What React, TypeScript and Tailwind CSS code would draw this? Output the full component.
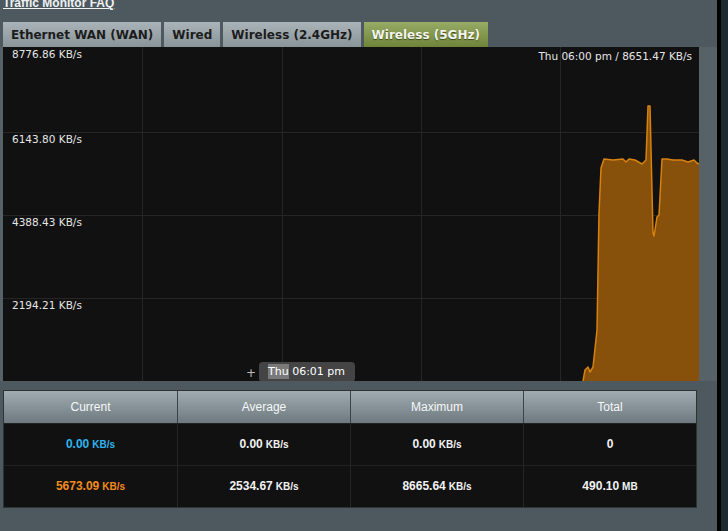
import React from "react";

const tabs = [
  { label: "Ethernet WAN (WAN)", active: false },
  { label: "Wired", active: false },
  { label: "Wireless (2.4GHz)", active: false },
  { label: "Wireless (5GHz)", active: true },
];

const axis = [
  { label: "8776.86 KB/s", top: 2 },
  { label: "6143.80 KB/s", top: 87 },
  { label: "4388.43 KB/s", top: 170 },
  { label: "2194.21 KB/s", top: 253 },
];

const points: [number, number][] = [
  [580, 334], [582, 323], [585, 320], [587, 325], [590, 320], [594, 283],
  [596, 166], [598, 121], [601, 112], [610, 113], [620, 112], [623, 115],
  [626, 112], [632, 113], [639, 117], [643, 113], [645, 59], [647, 59],
  [650, 186], [651, 189], [654, 170], [656, 168], [659, 112], [664, 112],
  [670, 113], [679, 113], [685, 115], [691, 113], [694, 116], [696, 117],
];

const line = points.map(([x, y], i) => `${i ? "L" : "M"}${x} ${y}`).join(" ");
const area = `${line} L696 334 Z`;

const columns = ["Current", "Average", "Maximum", "Total"];

const rows = [
  { color: "text-[#2db4ef]", cells: [["0.00", "KB/s"], ["0.00", "KB/s"], ["0.00", "KB/s"], ["0", ""]] },
  { color: "text-[#f28a1c]", cells: [["5673.09", "KB/s"], ["2534.67", "KB/s"], ["8665.64", "KB/s"], ["490.10", "MB"]] },
];

function Chart() {
  return (
    <div className="relative h-[334px] w-[696px] overflow-hidden bg-[#111111] font-['DejaVu_Sans',sans-serif] text-[10.5px] text-[#e6e6e6]">
      <svg className="absolute inset-0" width="696" height="334" viewBox="0 0 696 334">
        {[139, 279, 418, 557].map((x) => (
          <line key={x} x1={x + 0.5} y1="0" x2={x + 0.5} y2="334" stroke="#262626" strokeWidth="1" />
        ))}
        {[85, 168, 251].map((y) => (
          <line key={y} x1="0" y1={y + 0.5} x2="696" y2={y + 0.5} stroke="#262626" strokeWidth="1" />
        ))}
        <path d={area} fill="#87510b" />
        <path d={line} fill="none" stroke="#d8820f" strokeWidth="1.5" strokeLinejoin="round" />
      </svg>
      {axis.map((a) => (
        <span key={a.label} className="absolute left-[9px] leading-none" style={{ top: a.top }}>
          {a.label}
        </span>
      ))}
      <span className="absolute right-[7px] top-[4px] leading-none">Thu 06:00 pm / 8651.47 KB/s</span>
      <span className="absolute left-[243px] top-[320px] text-[12px] leading-none text-[#bbbbbb]">+</span>
      <div className="absolute left-[256px] top-[315px] h-[20px] w-[96px] whitespace-nowrap rounded-[4px] bg-[#4a4a4a]/90 px-[9px] pt-[2px] text-[11px] leading-[15px] text-white">
        <span className="inline-block bg-[#7a7a7a]">Thu</span> 06:01 pm
      </div>
    </div>
  );
}

export default function App() {
  return (
    <div className="flex h-[531px] w-[728px] overflow-hidden bg-[#4d595e]">
      <div className="flex w-[717px] flex-col">
        <div className="h-[22px] pl-[3px]">
          <a className="-mt-[6px] block text-[12px] font-bold text-[#eef2f3] underline font-['Liberation_Sans',sans-serif]">
            Traffic Monitor FAQ
          </a>
        </div>
        <div className="flex h-[25px] gap-[3px] pl-[3px]">
          {tabs.map((t) => (
            <div
              key={t.label}
              className={
                t.active
                  ? "flex items-center bg-gradient-to-b from-[#98ab66] to-[#6f8439] px-[8px] font-['DejaVu_Sans',sans-serif] text-[12px] font-bold text-[#f4f4ec] [text-shadow:0_1px_1px_#3a4a1a]"
                  : "flex items-center bg-gradient-to-b from-[#aab4b8] to-[#8a9599] px-[8px] font-['DejaVu_Sans',sans-serif] text-[12px] font-bold text-[#1c1c1c]"
              }
            >
              {t.label}
            </div>
          ))}
        </div>
        <div className="bg-[#566267] pl-[3px]">
          <Chart />
        </div>
        <div className="h-[9px]" />
        <div className="pl-[3px]">
          <div className="w-[694px] border border-[#2e3336] font-['Liberation_Sans',sans-serif] text-[12px]">
            <div className="grid h-[32px] grid-cols-4 bg-gradient-to-b from-[#a1acb1] to-[#6e7a7f] text-[#f5f7f8]">
              {columns.map((c, i) => (
                <div key={c} className={`flex items-center justify-center ${i ? "border-l border-[#3a4448]" : ""}`}>
                  {c}
                </div>
              ))}
            </div>
            {rows.map((r, ri) => (
              <div key={ri} className="grid h-[42px] grid-cols-4 border-t border-[#222222] bg-[#111111]">
                {r.cells.map(([v, u], i) => (
                  <div
                    key={i}
                    className={`flex items-center justify-center gap-[3px] pb-[1px] font-bold ${i === 0 ? r.color : "text-[#f2f2f2]"} ${i ? "border-l border-[#262626]" : ""}`}
                  >
                    <span>{v}</span>
                    {u && <span className="text-[10px]">{u}</span>}
                  </div>
                ))}
              </div>
            ))}
          </div>
        </div>
      </div>
      <div className="w-[4px] bg-black" />
      <div className="flex-1 bg-[#1c2a30]" />
    </div>
  );
}
